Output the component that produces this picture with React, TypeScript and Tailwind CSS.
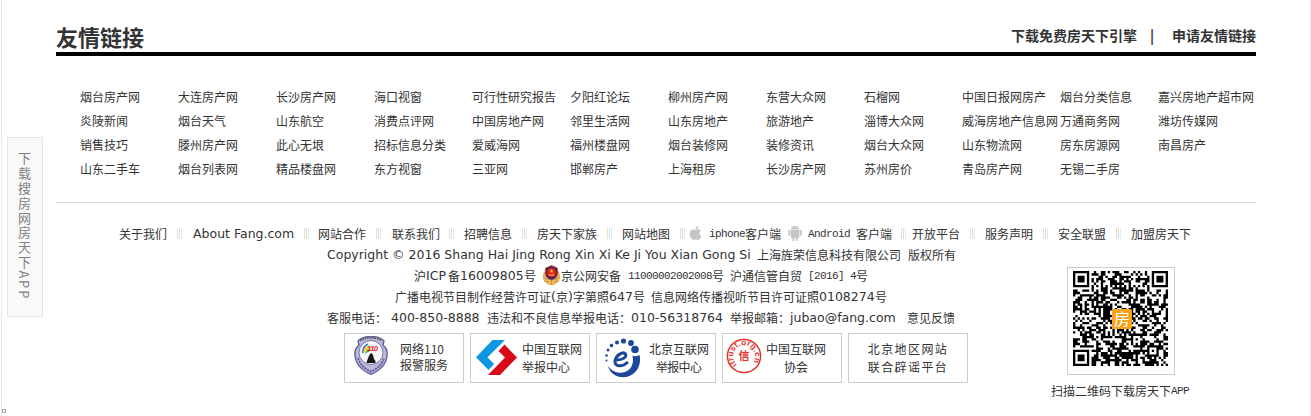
import React from "react";
import { FaApple } from "react-icons/fa";
import { AiFillAndroid } from "react-icons/ai";

const links: string[][] = [
  ["烟台房产网", "大连房产网", "长沙房产网", "海口视窗", "可行性研究报告", "夕阳红论坛", "柳州房产网", "东营大众网", "石榴网", "中国日报网房产", "烟台分类信息", "嘉兴房地产超市网"],
  ["炎陵新闻", "烟台天气", "山东航空", "消费点评网", "中国房地产网", "邻里生活网", "山东房地产", "旅游地产", "淄博大众网", "威海房地产信息网", "万通商务网", "潍坊传媒网"],
  ["销售技巧", "滕州房产网", "此心无垠", "招标信息分类", "爱威海网", "福州楼盘网", "烟台装修网", "装修资讯", "烟台大众网", "山东物流网", "房东房源网", "南昌房产"],
  ["山东二手车", "烟台列表网", "精品楼盘网", "东方视窗", "三亚网", "邯郸房产", "上海租房", "长沙房产网", "苏州房价", "青岛房产网", "无锡二手房"],
];

function T({ w = "", children }: { w?: string; children: React.ReactNode }) {
  return <span className={`block shrink-0 whitespace-nowrap ${w}`}>{children}</span>;
}

function Latin({ w = "", children }: { w?: string; children: React.ReactNode }) {
  return (
    <span className={`block shrink-0 whitespace-nowrap text-[12.5px] font-['DejaVu_Sans',sans-serif] ${w}`}>{children}</span>
  );
}

function Mono({ w = "", children }: { w?: string; children: React.ReactNode }) {
  return (
    <span className={`block shrink-0 whitespace-pre pt-px text-[11px] tracking-[-0.6px] font-['Liberation_Mono',monospace] ${w}`}>
      {children}
    </span>
  );
}

function Sep({ w }: { w: string }) {
  return (
    <span className={`flex h-[21px] shrink-0 items-center gap-px ${w}`}>
      <i className="block h-[11px] w-px bg-[#e6e3c4]" />
      <i className="block h-[11px] w-px bg-[#dcd9ea]" />
      <i className="block h-[11px] w-px bg-[#d3f1f3]" />
    </span>
  );
}

const N = 41;

function buildCode(): string {
  let seed = 20161;
  const rnd = () => {
    seed = (seed * 1103515245 + 12345) & 0x7fffffff;
    return (seed >> 12) / 0x7ffff;
  };
  const finder = (x: number, y: number, fx: number, fy: number): boolean | null => {
    const dx = Math.abs(x - fx);
    const dy = Math.abs(y - fy);
    const d = Math.max(dx, dy);
    if (d > 4) return null;
    return d !== 4 && d !== 2;
  };
  let path = "";
  for (let y = 0; y < N; y++) {
    for (let x = 0; x < N; x++) {
      let on = rnd() < 0.54;
      if (y === 6 || x === 6) on = (x + y) % 2 === 0;
      const a = Math.max(Math.abs(x - 34), Math.abs(y - 34));
      if (a <= 2) on = a !== 1;
      for (const [fx, fy] of [[3, 3], [N - 4, 3], [3, N - 4]]) {
        const f = finder(x, y, fx, fy);
        if (f !== null) on = f;
      }
      if (on) path += `M${x} ${y}h1v1h-1z`;
    }
  }
  return path;
}

const codePath = buildCode();

function PoliceEmblem() {
  return (
    <svg width="19" height="21" viewBox="0 0 19 21" className="shrink-0">
      <path d="M2 7Q-1 13 3 17Q6 21 9.500 20Q13 21 16 17Q20 13 17 7Z" fill="#e9bb66" />
      <path d="M1 12l5 3M2 16l5 1M18 12l-5 3M17 16l-5 1M9.500 15v5" stroke="#c48a35" strokeWidth=".8" />
      <path d="M9.500 0.500L12 1.500L15.500 3L16 8Q15 14 9.500 15Q4 14 3 8L3.500 3L7 1.500Z" fill="#29246a" stroke="#d9663a" strokeWidth=".8" />
      <circle cx="9.500" cy="7.500" r="5" fill="#d9201b" />
      <path d="M9.500 4l.7 1.500h1.600l-1.300 1 .5 1.500-1.500-.9L8 8l.5-1.500-1.300-1h1.600zM6.700 9.500h5.600v1H6.700z" fill="#f8cc43" />
    </svg>
  );
}

function ShieldIcon() {
  return (
    <svg width="34" height="39" viewBox="0 0 34 39" className="shrink-0">
      <path d="M4 5Q9 0 17 .8Q25 0 30 5L29 9Q34 13 33 20C32 29 25 35 17 38.300C9 35 2 29 1 20Q0 13 5 9Z" fill="#b9bad9" stroke="#5c5b9c" strokeWidth="1.300" />
      <path d="M4 22C6 29 11 33 17 35.500C23 33 28 29 30 22" fill="none" stroke="#5a5994" strokeWidth="2" strokeDasharray="2 1" />
      <path d="M6 4.500Q17 -1 28 4.500" fill="none" stroke="#555" strokeWidth="2" strokeDasharray="1.500 1" />
      <circle cx="17" cy="16.500" r="12" fill="#f8f8fc" stroke="#7472aa" />
      <path d="M9 18Q10 10 16 9L14 14Q11 15 9 18" fill="#f3cf30" />
      <path d="M10 19Q12 14 17 12L15 16Q12 16 10 19" fill="#38a65c" />
      <path d="M8.500 17Q9 10 14 8" fill="none" stroke="#3a71c4" strokeWidth="1.500" />
      <text x="13" y="14.500" fontSize="7.500" textLength="11" fontWeight="bold" fontStyle="italic" fill="#df2523" fontFamily="Liberation Sans">110</text>
      <path d="M13 25l1.500-4 1.500-3 1.500-1 1.500 2 1 4 1.500 2v2h-9z" fill="#171717" />
    </svg>
  );
}

function DiamondIcon() {
  return (
    <svg width="41" height="35" viewBox="0 0 41 35" className="shrink-0">
      <path d="M16.500 0H29L11.500 17.300L18 24L12.500 30L0 17.300Z" fill="#0d97e3" />
      <path d="M28.500 4.500L41 17.500L24 35H12L29 17.500L22.500 11Z" fill="#d80b18" />
    </svg>
  );
}

function ReportIcon() {
  return (
    <svg width="36" height="40" viewBox="0 0 36 40" className="shrink-0">
      <g fill="#1c479b">
        <path d="M34.500 17C37 27 31 39 18.500 39.200C9 39.200 4 33 3 28C7 34 14 36 20 34C27 31 29 25 27.500 17.500Q31 19 34.500 17Z" />
        <circle cx="30" cy="11.500" r="3.800" />
        <circle cx="26" cy="5" r="2.900" />
        <circle cx="18.500" cy="3" r="2.600" />
        <circle cx="12" cy="4.500" r="2" />
        <circle cx="6.500" cy="7.500" r="1.800" />
        <circle cx="3" cy="12" r="1.500" />
        <circle cx="1.500" cy="17.500" r="1.300" />
        <circle cx="1.500" cy="22.500" r="1" />
      </g>
      <path d="M11.500 22C18 22 22 19 20.500 16C18 13 11 17 10 23C9.500 29 17 29.500 23 24" fill="none" stroke="#1c479b" strokeWidth="3" />
    </svg>
  );
}

function TrustIcon() {
  return (
    <svg width="36" height="36" viewBox="0 0 36 36" className="shrink-0">
      <defs>
        <path id="ring" d="M11 26.600A11 11 0 1 1 25 26.600" />
      </defs>
      <circle cx="18" cy="18" r="16.600" fill="#fff" stroke="#e6322f" strokeWidth="1.500" />
      <text fontSize="8" fontWeight="bold" fill="#e6322f" fontFamily="Liberation Sans" textLength="50">
        <textPath href="#ring">itrust.org.cn</textPath>
      </text>
      <text x="18" y="22" textAnchor="middle" fontSize="11" fontWeight="bold" fill="#e6322f" fontFamily="Noto Sans CJK SC">信</text>
    </svg>
  );
}

const badge = "flex h-[50px] w-[120px] shrink-0 border border-[#ccc]";

export default function App() {
  return (
    <div className="relative flex h-[416px] w-[1311px] overflow-hidden bg-white text-[12px] leading-[21px] text-[#333] font-['Noto_Sans_CJK_SC',sans-serif]">
      <div className="relative w-14 shrink-0 pt-[137px]">
        <i className="absolute left-px top-0 h-full w-px bg-[#e6e6e6]" />
        <i className="absolute left-[2px] top-[409px] h-1 w-1 border border-[#aaa] bg-white" />
        <aside className="ml-[7px] h-[180px] w-9 border border-[#e5e5e5] bg-[#f9f9f9] pr-px pt-[14px] text-[13px] leading-[33px] tracking-[1.8px] text-[#808080] [writing-mode:vertical-rl]">
          <span className="whitespace-nowrap">下载搜房网房天下APP</span>
        </aside>
      </div>

      <main className="w-[1200px] shrink-0">
        <header className="flex h-14 justify-between border-b-4 border-black font-bold">
          <h2 className="pt-[21px] text-[22px] leading-[30px]">友情链接</h2>
          <div className="flex pt-[24px] text-[14px] leading-[22px]">
            <T w="w-[139px]">下载免费房天下引擎</T>
            <T w="w-[22px]">|</T>
            <T w="w-[84px]">申请友情链接</T>
          </div>
        </header>

        <section className="h-[147px] border-b border-[#ddd] pl-6 pt-[28px]">
          {links.map((row, i) => (
            <div key={i} className="flex h-6 items-center">
              {row.map((name) => (
                <T key={name} w="w-[98px]">{name}</T>
              ))}
            </div>
          ))}
        </section>

        <footer className="pt-5">
          <nav className="flex h-[21px] pl-[63px]">
            <T w="w-[58px]">关于我们</T>
            <Sep w="w-4" />
            <Latin w="w-[111px]">About Fang.com</Latin>
            <Sep w="w-[14px]" />
            <T w="w-[58px]">网站合作</T>
            <Sep w="w-4" />
            <T w="w-[57px]">联系我们</T>
            <Sep w="w-[15px]" />
            <T w="w-[58px]">招聘信息</T>
            <Sep w="w-[15px]" />
            <T w="w-[70px]">房天下家族</T>
            <Sep w="w-[15px]" />
            <T w="w-[58px]">网站地图</T>
            <Sep w="w-2" />
            <span className="w-[21px] shrink-0 pt-[2px]"><FaApple className="-ml-px h-4 w-[17px] text-[#c5c5c5]" /></span>
            <Mono w="w-9">iphone</Mono>
            <T w="w-[42px]">客户端</T>
            <span className="w-[21px] shrink-0 pt-px"><AiFillAndroid className="-ml-px h-[18px] w-[18px] text-[#c5c5c5]" /></span>
            <Mono w="w-12">Android</Mono>
            <T w="w-[45px]">客户端</T>
            <Sep w="w-[11px]" />
            <T w="w-[58px]">开放平台</T>
            <Sep w="w-[15px]" />
            <T w="w-[58px]">服务声明</T>
            <Sep w="w-[15px]" />
            <T w="w-[58px]">安全联盟</T>
            <Sep w="w-[15px]" />
            <T>加盟房天下</T>
          </nav>

          <div className="flex">
            <div className="w-[1011px] shrink-0">
              <div className="flex h-[21px] pl-[271px]">
                <Latin w="w-[430px]">Copyright © 2016 Shang Hai Jing Rong Xin Xi Ke Ji You Xian Gong Si</Latin>
                <T w="w-[151px]">上海旌荣信息科技有限公司</T>
                <T>版权所有</T>
              </div>
              <div className="flex h-[21px] pl-[358px]">
                <T w="w-[12px]">沪</T>
                <Latin w="w-[22px]">ICP</Latin>
                <T w="w-[12px]">备</T>
                <Latin w="w-[64px]">16009805</Latin>
                <T w="w-[18px]">号</T>
                <span className="w-[19px] shrink-0"><PoliceEmblem /></span>
                <T w="w-[67px]">京公网安备</T>
                <Mono w="w-[84px]">11000002002008</Mono>
                <T w="w-[18px]">号</T>
                <T w="w-[78px]">沪通信管自贸</T>
                <Mono w="w-12">[2016] 4</Mono>
                <T>号</T>
              </div>
              <div className="flex h-[21px] pl-[339px]">
                <T w="w-[156px]">广播电视节目制作经营许可证</T>
                <Latin w="w-[5px]">(</Latin>
                <T w="w-[12px]">京</T>
                <Latin w="w-[5px]">)</Latin>
                <T w="w-9">字第照</T>
                <Latin w="w-[24px]">647</Latin>
                <T w="w-[18px]">号</T>
                <T w="w-[168px]">信息网络传播视听节目许可证照</T>
                <Latin w="w-[56px]">0108274</Latin>
                <T>号</T>
              </div>
              <div className="flex h-[21px] pl-[271px]">
                <T w="w-[64px]">客服电话：</T>
                <Latin w="w-[96px]">400-850-8888</Latin>
                <T w="w-[144px]">违法和不良信息举报电话：</T>
                <Latin w="w-[99px]">010-56318764</Latin>
                <T w="w-[60px]">举报邮箱：</T>
                <Latin w="w-[117px]">jubao@fang.com</Latin>
                <T>意见反馈</T>
              </div>
              <div className="flex gap-[6px] pl-[288px] pt-[5px] leading-[18px]">
                <div className={`${badge} pl-[9px] pt-[2px]`}>
                  <ShieldIcon />
                  <div className="ml-3 pt-[5px] leading-4">
                    <div className="flex"><T w="w-[24px]">网络</T><span>110</span></div>
                    <T>报警服务</T>
                  </div>
                </div>
                <div className={`${badge} pl-[5px] pt-[6px]`}>
                  <DiamondIcon />
                  <div className="ml-[5px]">
                    <T>中国互联网</T>
                    <T>举报中心</T>
                  </div>
                </div>
                <div className={`${badge} pl-2 pt-1`}>
                  <ReportIcon />
                  <div className="ml-2 pt-[2px]">
                    <T>北京互联网</T>
                    <T w="pl-[7px] tracking-[-0.7px]">举报中心</T>
                  </div>
                </div>
                <div className={`${badge} pl-[3px] pt-1`}>
                  <TrustIcon />
                  <div className="ml-[4px] w-[60px] pt-[2px] text-center">
                    <T>中国互联网</T>
                    <T>协会</T>
                  </div>
                </div>
                <div className={`${badge} justify-center pt-[6px] tracking-[1.4px]`}>
                  <div>
                    <T>北京地区网站</T>
                    <T>联合辟谣平台</T>
                  </div>
                </div>
              </div>
            </div>

            <div className="w-[140px] shrink-0 pt-[23px]">
              <div className="relative h-[108px] w-[108px] border border-[#ccc] pl-[5px] pt-[3px]">
                <svg width="95" height="95" viewBox="0 0 41 41">
                  <path d={codePath} fill="#000" />
                </svg>
                <span className="absolute left-[44px] top-[41px] h-5 w-5 rounded-[2px] bg-[#fba11b] text-center text-[16px] leading-[19px] text-white">房</span>
              </div>
              <div className="-ml-4 mt-[5px] flex">
                <T w="w-[120px]">扫描二维码下载房天下</T>
                <Mono>APP</Mono>
              </div>
            </div>
          </div>
        </footer>
      </main>
      <i className="absolute right-0 top-0 h-full w-px bg-[#e6e6e6]" />
    </div>
  );
}
